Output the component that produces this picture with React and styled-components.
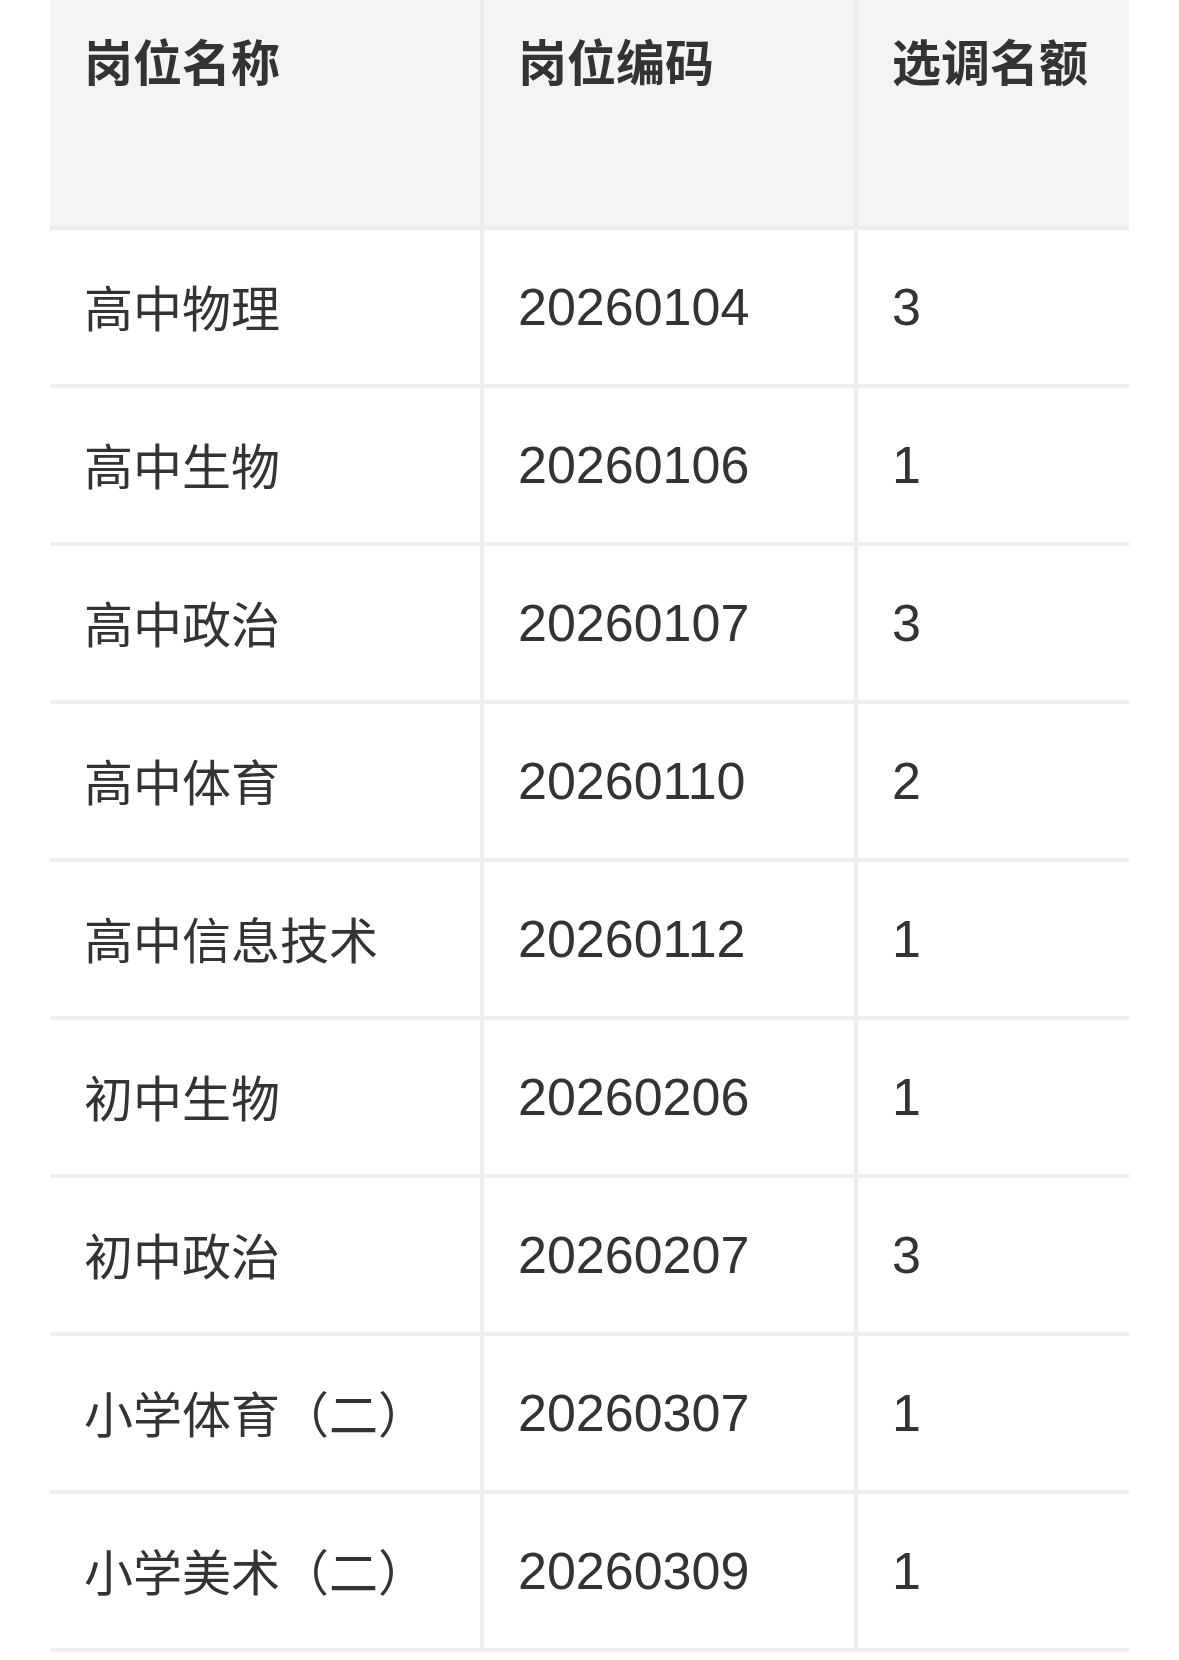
import React from "react";
import styled, { createGlobalStyle } from "styled-components";

const GlobalStyle = createGlobalStyle`
  html, body {
    margin: 0;
    padding: 0;
    background: #ffffff;
  }
  body {
    font-family: "Noto Sans CJK SC", "Noto Sans", sans-serif;
    color: #333333;
  }
`;

const positions = [
  { name: "高中物理", code: "20260104", quota: "3" },
  { name: "高中生物", code: "20260106", quota: "1" },
  { name: "高中政治", code: "20260107", quota: "3" },
  { name: "高中体育", code: "20260110", quota: "2" },
  { name: "高中信息技术", code: "20260112", quota: "1" },
  { name: "初中生物", code: "20260206", quota: "1" },
  { name: "初中政治", code: "20260207", quota: "3" },
  { name: "小学体育（二）", code: "20260307", quota: "1" },
  { name: "小学美术（二）", code: "20260309", quota: "1" },
];

export default function App() {
  return (
    <>
      <GlobalStyle />
      <Page>
        <TableWrap>
          <HeadRow>
            <HeadCell>岗位名称</HeadCell>
            <HeadCell>岗位编码</HeadCell>
            <HeadCell $last>选调名额</HeadCell>
          </HeadRow>

          {positions.map((p) => (
            <BodyRow key={p.code}>
              <Cell>{p.name}</Cell>
              <Cell $num>{p.code}</Cell>
              <Cell $num $last>
                {p.quota}
              </Cell>
            </BodyRow>
          ))}
        </TableWrap>
      </Page>
    </>
  );
}

const Page = styled.div`
  width: 1179px;
  min-height: 1660px;
  padding-left: 50px;
  box-sizing: border-box;
`;

const TableWrap = styled.div`
  width: 1079px;
  overflow: hidden;
`;

const Row = styled.div`
  display: grid;
  grid-template-columns: 434px 374px 271px;
  border-bottom: 4px solid #eeeeee;
`;

const HeadRow = styled(Row)`
  height: 230px;
  box-sizing: border-box;
  background: #f4f4f4;
  border-bottom-color: #ededed;
`;

const BodyRow = styled(Row)`
  height: 158px;
  box-sizing: border-box;
`;

const HeadCell = styled.div`
  box-sizing: border-box;
  padding: 26px 0 0 34px;
  font-size: 49px;
  line-height: 68px;
  font-weight: 700;
  color: #333333;
  border-right: ${(p) => (p.$last ? "none" : "4px solid #ebebeb")};
`;

const Cell = styled.div`
  box-sizing: border-box;
  display: flex;
  align-items: center;
  padding-left: ${(p) => (p.$num ? "34px" : "34px")};
  padding-bottom: ${(p) => (p.$num ? "0" : "4px")};
  font-family: ${(p) =>
    p.$num
      ? `"Liberation Sans", Arial, sans-serif`
      : `"Noto Sans CJK SC", sans-serif`};
  font-size: ${(p) => (p.$num ? "52px" : "49px")};
  font-weight: 400;
  color: #333333;
  white-space: nowrap;
  border-right: ${(p) => (p.$last ? "none" : "4px solid #eeeeee")};
`;
